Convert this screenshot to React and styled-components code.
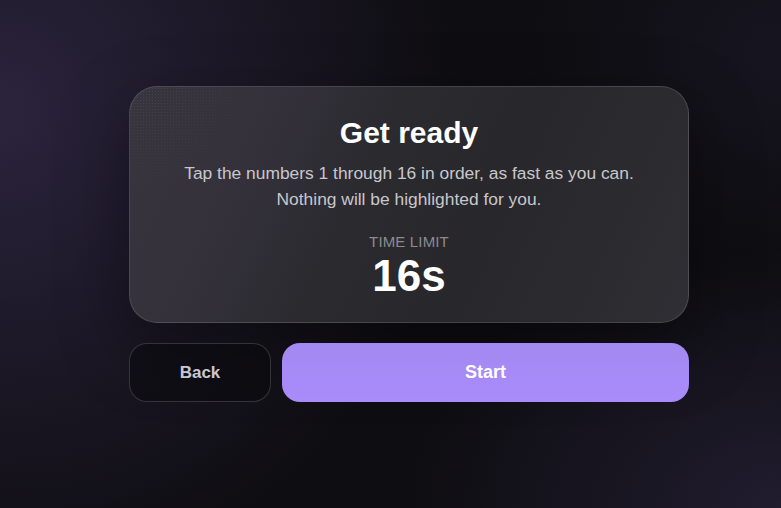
import React from "react";
import styled, { createGlobalStyle } from "styled-components";

const GlobalStyle = createGlobalStyle`
  html, body {
    margin: 0;
    padding: 0;
    height: 100%;
    background: #0e0d11;
  }
  #root {
    min-height: 100%;
  }
  * { box-sizing: border-box; }
`;

const Page = styled.main`
  min-height: 100vh;
  display: flex;
  align-items: flex-start;
  padding: 86px 0 0 129px;
  font-family: "Liberation Sans", Arial, sans-serif;
  background:
    radial-gradient(ellipse 460px 480px at 0% 22%, rgba(46, 38, 66, 0.9) 0%, rgba(46, 38, 66, 0) 100%),
    radial-gradient(ellipse 380px 260px at 100% 100%, rgba(36, 31, 52, 0.85) 0%, rgba(36, 31, 52, 0) 100%),
    radial-gradient(ellipse 260px 220px at 100% 10%, rgba(28, 25, 40, 0.6) 0%, rgba(28, 25, 40, 0) 100%),
    #0e0d11;
`;

const Column = styled.div`
  width: 560px;
  display: flex;
  flex-direction: column;
  gap: 20px;
`;

const Card = styled.section`
  position: relative;
  overflow: hidden;
  display: flex;
  flex-direction: column;
  align-items: center;
  padding: 28px 32px 25px;
  border-radius: 28px;
  border: 1px solid rgba(255, 255, 255, 0.13);
  background: linear-gradient(
    115deg,
    #39353f 0%,
    #34313b 22%,
    #2b2a2f 42%,
    #28272b 62%,
    #2c2b30 85%,
    #302f35 100%
  );
  box-shadow: 0 24px 70px rgba(0, 0, 0, 0.4);
  text-align: center;

  &::before {
    content: "";
    position: absolute;
    inset: 0;
    pointer-events: none;
    background-image: radial-gradient(rgba(255, 255, 255, 0.09) 0.6px, transparent 0.9px);
    background-size: 3px 3px;
    -webkit-mask-image: radial-gradient(ellipse 130px 110px at 0% 0%, #000 0%, transparent 100%);
    mask-image: radial-gradient(ellipse 130px 110px at 0% 0%, #000 0%, transparent 100%);
  }
`;

const Title = styled.h1`
  position: relative;
  margin: 0;
  font-size: 30px;
  line-height: 36px;
  font-weight: 700;
  color: #ffffff;
`;

const Body = styled.p`
  position: relative;
  margin: 9px 0 0;
  font-size: 17.4px;
  line-height: 26px;
  color: #c8c7cd;
`;

const Label = styled.div`
  position: relative;
  margin-top: 21px;
  font-size: 15px;
  line-height: 18px;
  color: #8c8b91;
  letter-spacing: 0.01em;
  text-transform: uppercase;
`;

const Value = styled.div`
  position: relative;
  margin-top: 4px;
  font-size: 44px;
  line-height: 42px;
  font-weight: 700;
  color: #ffffff;
`;

const Actions = styled.div`
  position: relative;
  display: flex;
  gap: 11px;
`;

const Button = styled.button`
  height: 59px;
  border-radius: 18px;
  font-family: "Liberation Sans", Arial, sans-serif;
  font-weight: 700;
  cursor: pointer;
  display: flex;
  align-items: center;
  justify-content: center;
  padding: 0;
  ${({ $primary }) =>
    $primary
      ? `
    flex: 1;
    border: none;
    background: linear-gradient(180deg, #a389f1 0%, #a98bfa 100%);
    color: #ffffff;
    font-size: 18px;
  `
      : `
    width: 142px;
    border: 1px solid rgba(255, 255, 255, 0.16);
    background: rgba(10, 9, 13, 0.55);
    color: #c9c8ce;
    font-size: 17px;
  `}
`;

export default function App() {
  return (
    <>
      <GlobalStyle />
      <Page>
        <Column>
          <Card>
            <Title>Get ready</Title>
            <Body>
              Tap the numbers 1 through 16 in order, as fast as you can.
              <br />
              Nothing will be highlighted for you.
            </Body>
            <Label>Time limit</Label>
            <Value>16s</Value>
          </Card>
          <Actions>
            <Button type="button">Back</Button>
            <Button type="button" $primary>
              Start
            </Button>
          </Actions>
        </Column>
      </Page>
    </>
  );
}
